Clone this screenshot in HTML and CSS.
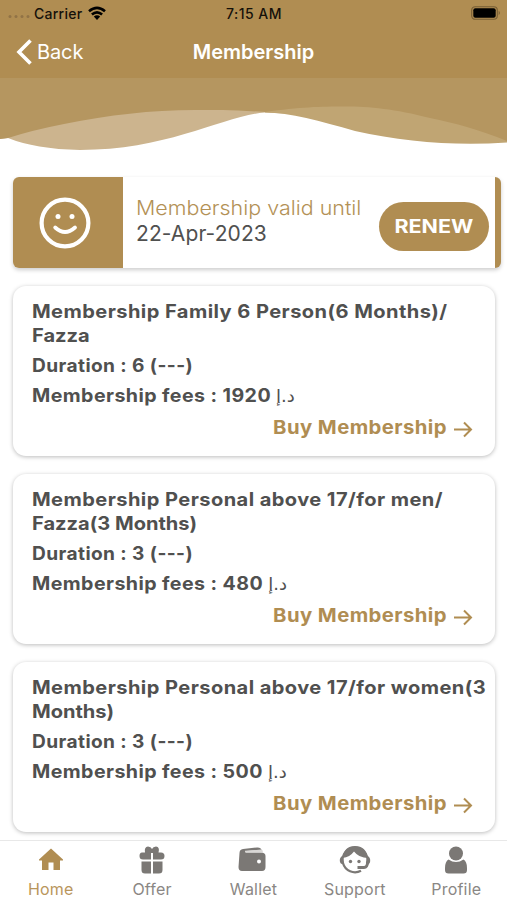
FILE: index.html
```html
<!DOCTYPE html>
<html lang="en">
<head>
<meta charset="utf-8">
<title>Membership</title>
<link rel="stylesheet" href="styles.css">
</head>
<body>
<div class="app">
  <header class="top">
    <div class="status">
      <div class="carrier">
        <svg class="signal" width="22" height="5" viewBox="0 0 22 5"><circle cx="2" cy="2.5" r="1.5"/><circle cx="8" cy="2.5" r="1.5"/><circle cx="14" cy="2.5" r="1.5"/><circle cx="20" cy="2.5" r="1.5"/></svg>
        <span class="carrier-name">Carrier</span>
        <svg class="wifi" width="20" height="15" viewBox="0 0 20 15"><path d="M2 5.2Q10-1.6 18 5.2M4.9 8.5Q10 4.2 15.1 8.5" fill="none" stroke="#000" stroke-width="2.6"/><path d="M6.8 10.6Q10 8 13.2 10.6L10 14Z"/></svg>
      </div>
      <span class="time">7:15 AM</span>
      <svg class="battery" width="30" height="14" viewBox="0 0 30 14"><rect x=".7" y=".7" width="25.6" height="12.6" rx="3.5" fill="none" stroke="#765d34" stroke-width="1.1"/><rect x="2.3" y="2.3" width="22.4" height="9.4" rx="2"/><path d="M27.7 4.8Q30 7 27.7 9.2Z" fill="#765d34"/></svg>
    </div>
    <nav class="bar">
      <a class="back"><svg width="17" height="28" viewBox="0 0 17 28"><path d="M15.500 2.500 4 14 15.500 25.500" fill="none" stroke="#fff" stroke-width="3.6"/></svg><span class="back-text">Back</span></a>
      <h1 class="title">Membership</h1>
    </nav>
  </header>
  <svg class="wave" width="507" height="73" viewBox="0 0 507 73">
    <path d="M0 0H300V36L265 34.500C225 37 170 72 80 72Q35 71 8 60L0 61Z" fill="#ccb48e"/>
    <path d="M265 34V10H507V64.500C455 68 405 64 355 53C320 43 290 34.500 265 34.500Z" fill="#c0a573"/>
    <path d="M0 0H507V63C480 52 455 45 430 40C395 31 370 28.500 345 28.500C320 28.500 300 29 265 34C235 32 215 32 195 32C150 32 110 37 64 46Q33 52 8 60L0 61Z" fill="#b59660"/>
  </svg>
  <main class="content">
    <section class="validity">
      <div class="smile"><svg width="52" height="52" viewBox="0 0 52 52"><circle cx="26" cy="26" r="23.4" fill="none" stroke="#fff" stroke-width="4.2"/><circle cx="19" cy="19.5" r="2.5" fill="#fff"/><circle cx="33" cy="19.5" r="2.5" fill="#fff"/><path d="M16.2 30.500Q26 39.500 36 30.500" fill="none" stroke="#fff" stroke-width="3.8" stroke-linecap="round"/></svg></div>
      <div class="until"><span class="valid">Membership valid until</span><span class="date">22-Apr-2023</span></div>
      <button class="renew"><span class="renew-text">RENEW</span></button>
    </section>
    <article class="card">
      <h2 class="name">Membership Family 6 Person(6 Months)/<br><span class="rest">Fazza</span></h2>
      <p class="line">Duration : 6 (---)</p>
      <p class="line fees">Membership fees : 1920 <span class="aed" dir="rtl">د.إ</span></p>
      <a class="buy"><span class="buy-text">Buy Membership</span><svg width="19" height="17" viewBox="0 0 19 17"><path d="M0 8.5H17M10 1.5 17 8.5 10 15.5"/></svg></a>
    </article>
    <article class="card">
      <h2 class="name">Membership Personal above 17/for men/<br><span class="rest">Fazza(3 Months)</span></h2>
      <p class="line">Duration : 3 (---)</p>
      <p class="line fees">Membership fees : 480 <span class="aed" dir="rtl">د.إ</span></p>
      <a class="buy"><span class="buy-text">Buy Membership</span><svg width="19" height="17" viewBox="0 0 19 17"><path d="M0 8.5H17M10 1.5 17 8.5 10 15.5"/></svg></a>
    </article>
    <article class="card">
      <h2 class="name">Membership Personal above 17/for women(3<br><span class="rest">Months)</span></h2>
      <p class="line">Duration : 3 (---)</p>
      <p class="line fees">Membership fees : 500 <span class="aed" dir="rtl">د.إ</span></p>
      <a class="buy"><span class="buy-text">Buy Membership</span><svg width="19" height="17" viewBox="0 0 19 17"><path d="M0 8.5H17M10 1.5 17 8.5 10 15.5"/></svg></a>
    </article>
  </main>
  <footer class="tabs">
    <a class="tab active"><svg width="32" height="30" viewBox="0 0 32 30"><path d="M16 3.500 28 14.500V15.500H25V25H18.500V17.500H13.500V25H7V15.500H4V14.500Z"/></svg><span>Home</span></a>
    <a class="tab"><svg width="32" height="30" viewBox="0 0 32 30"><path d="M6 7.500H9Q8 2 12 1.500Q15 1.500 16 4Q17 1.500 20 1.500Q24 2 22.500 7.500H25Q28.500 7.500 28.500 11Q28.500 14.500 25 14.500H17V8H15V14.500H7Q3.500 14.500 3.500 11Q3.500 7.500 6 7.500ZM5.500 16.500H15V28.500H9Q5.500 28.500 5.500 25ZM17 16.500H26.500V25Q26.500 28.500 23 28.500H17Z"/></svg><span>Offer</span></a>
    <a class="tab"><svg width="32" height="30" viewBox="0 0 32 30"><path d="M2.500 8Q2.500 4.500 6 4L20 2.500Q24 2.200 24.500 5L9 6V7.500H24Q28.500 7.500 28.500 11V22Q28.500 26 25 26H5Q1.500 26 1.500 22Z"/><path d="M8 5.800 24 4.600Q26 4.800 26 7.500H8Z" fill="#d9d7d5"/><circle cx="22" cy="16.500" r="2" fill="#fff"/></svg><span>Wallet</span></a>
    <a class="tab"><svg width="32" height="30" viewBox="0 0 32 30"><path d="M22 25.800A12.400 12.400 0 1 1 28 18" fill="none" stroke="#7b7875" stroke-width="2.200"/><path d="M3.500 13Q5 1 16 1Q27 1 29 13Q20 13 15 6.500Q11 12 3.500 13ZM4 10.500Q.5 12 .8 16Q1 19 4.500 19.500ZM28 10.500Q31.500 12 31.200 16Q31 19 28 20Z"/><circle cx="11.500" cy="16.500" r="1.700"/><circle cx="20" cy="16.500" r="1.700"/><path d="M28.500 17Q28.500 22.500 25 22.500H18.500" fill="none" stroke="#7b7875" stroke-width="2.800"/></svg><span>Support</span></a>
    <a class="tab"><svg width="32" height="30" viewBox="0 0 32 30"><circle cx="16" cy="8.500" r="7"/><path d="M8.500 14.500Q16 19.500 23.500 14.500Q27 16.500 27 23V25Q27 28.500 23.500 28.500H8.500Q5 28.500 5 25V23Q5 16.500 8.500 14.500Z"/></svg><span>Profile</span></a>
  </footer>
</div>
</body>
</html>
```
FILE: styles.css
```css
* { box-sizing: border-box; margin: 0; padding: 0; }
body { width: 507px; height: 900px; overflow: hidden; background: #fff; font-family: Inter, "Liberation Sans", sans-serif; color: #50504f; }
.app { height: 900px; display: flex; flex-direction: column; }
.top { height: 78px; background: #b08d52; flex: none; }
.status { height: 26px; display: grid; grid-template-columns: 1fr auto 1fr; align-items: center; padding: 0 6px 0 8px; color: #15110a; font-size: 14px; font-weight: 500; }
.carrier { display: flex; align-items: center; gap: 5px; }
.signal { fill: #917346; margin-top: 7px; margin-right: -1px; }
.carrier-name { letter-spacing: .25px; }
.time { letter-spacing: .45px; padding-right: 1px; }
.battery { justify-self: end; }
.bar { height: 52px; display: grid; grid-template-columns: 1fr auto 1fr; align-items: center; padding: 0 15px; color: #fff; }
.back { display: flex; align-items: center; gap: 5px; font-size: 20px; }
.back-text { letter-spacing: -.1px; }
.title { font-size: 20px; font-weight: 600; }
.wave { display: block; flex: none; }
.content { flex: 1; min-height: 0; padding: 26px 12px 0 13px; display: flex; flex-direction: column; gap: 18px; }
.validity { flex: none; width: 488px; height: 91px; display: flex; align-items: center; border-right: 6px solid #b08d52; border-radius: 6px; background: #fff; box-shadow: 0 2px 4px #0003; }
.smile { width: 110px; height: 91px; display: grid; place-items: center; padding-right: 6px; border-radius: 6px 0 0 6px; background: #b08d52; }
.until { width: 256px; padding: 0 0 3px 13px; display: flex; flex-direction: column; align-items: flex-start; white-space: nowrap; }
.valid { font-size: 19.500px; line-height: 25px; color: #b39156; font-weight: 300; transform: scaleX(1.1); transform-origin: left; }
.date { font-size: 21px; line-height: 25px; letter-spacing: .1px; }
.renew { width: 110px; height: 49px; margin-top: 7px; border: 0; border-radius: 25px; background: #b08d52; color: #fff; font: 700 19px Inter, sans-serif; }
.renew-text { display: inline-block; transform: scaleX(1.13); }
.card { flex: none; height: 170px; padding: 13px 22px 0 19px; border-radius: 13px; background: #fff; box-shadow: 0 1px 4px #0004; display: flex; flex-direction: column; white-space: nowrap; }
.name { font-size: 18.500px; line-height: 24px; font-weight: 650; height: 51px; letter-spacing: .4px; transform: scaleX(1.084); transform-origin: left; }
.rest { letter-spacing: 0; }
.line { height: 30px; line-height: 30px; font-size: 18.500px; font-weight: 650; letter-spacing: .4px; transform: scaleX(1.033); transform-origin: left; }
.fees { transform: scaleX(1.06); }
.aed { display: inline-block; font: 400 17px "DejaVu Sans", sans-serif; letter-spacing: 0; }
.buy { height: 34px; display: flex; justify-content: flex-end; align-items: center; gap: 7px; color: #b08d52; }
.buy-text { font-size: 19px; font-weight: 650; letter-spacing: .4px; transform: scaleX(1.067); transform-origin: right; }
.buy svg { fill: none; stroke: #b08d52; stroke-width: 2; margin-top: 4px; }
.tabs { flex: none; height: 60px; display: grid; grid-template-columns: repeat(5, 1fr); border-top: 1px solid #e8e8e8; background: #fff; position: relative; }
.tab { display: flex; flex-direction: column; align-items: center; padding-top: 4px; color: #8a8784; fill: #7b7875; font-size: 16px; line-height: 28px; letter-spacing: .2px; }
.tab svg { flex: none; }
.tab.active { color: #b9965c; fill: #b08d52; }
```
